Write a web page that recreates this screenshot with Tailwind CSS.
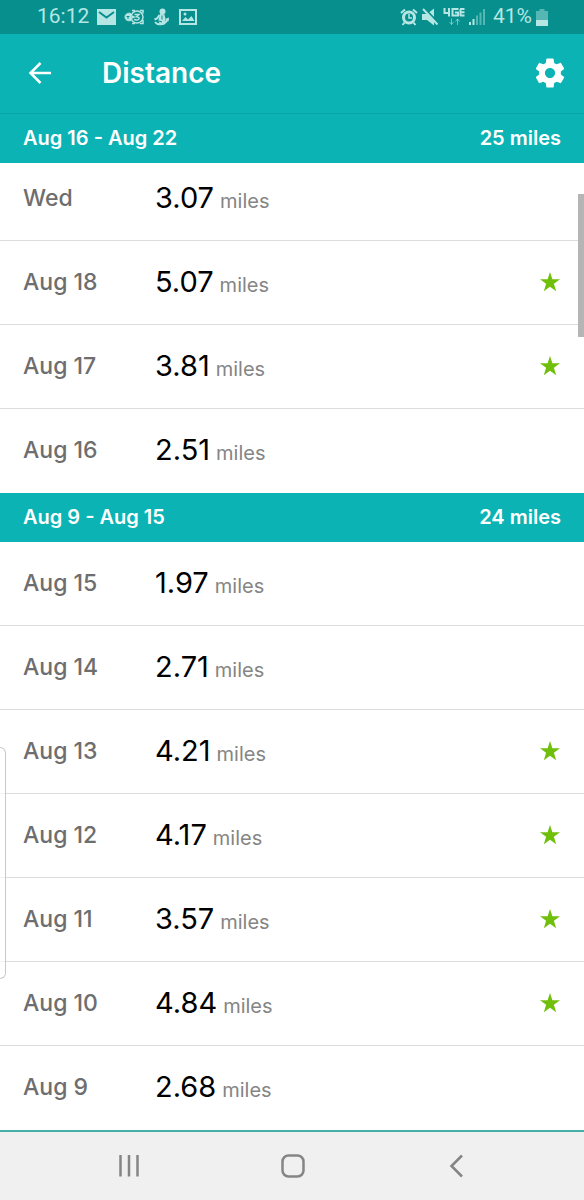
<!DOCTYPE html>
<html lang="en">
<head>
  <meta charset="UTF-8">
  <meta name="viewport" content="width=device-width, initial-scale=1.0">
  <title>Distance</title>
  <script src="https://cdn.jsdelivr.net/npm/@tailwindcss/browser@4"></script>
</head>
<body class="relative min-h-screen flex flex-col bg-white font-['Inter',sans-serif]">
  <!-- Status bar -->
  <div class="h-[34px] shrink-0 flex items-center justify-between bg-[#078f8d] text-[#b5e6e4] pl-[37px] pr-9 font-['Roboto',sans-serif] text-[21px]">
    <div class="flex items-center gap-2">
      <span>16:12</span>
      <svg class="w-[19px] h-4" viewBox="0 0 19 16" fill="currentColor" aria-hidden="true">
        <path d="M0 0h19v16H0z" />
        <path d="M2 3l7.500 5.500L17 3" fill="none" stroke="#078f8d" stroke-width="2" />
      </svg>
      <svg class="w-5 h-4" viewBox="0 0 20 16" fill="none" stroke="currentColor" aria-hidden="true">
        <path d="M7 4.500C4 3.500 1 5 1 8s3 4.500 6 3.500" fill="currentColor" stroke-width="1" />
        <path d="M2.500 7.500h3M3 9h2" stroke="#078f8d" stroke-width="1" />
        <circle cx="13" cy="8" r="6" stroke-width="1.500" />
        <path d="M8 1.500h3M16 1.500h3v3M19 11v3.500h-3M8 14.500h3" stroke-width="1.500" />
        <path d="M10.500 5.500h4.500l-2.500 2.300c4 0 3 3.500 0 3.200l-2.500-.5M8 7l2 1-2 1" stroke-width="1.500" />
      </svg>
      <svg class="w-[19px] h-[18px]" viewBox="0 0 19 18" fill="currentColor" aria-hidden="true">
        <circle cx="10.500" cy="3.500" r="3" />
        <path d="M8 5.500l4.500 1 1 4.500-1 5.500H7.500L6.500 12z" />
        <path d="M7.500 7L5 10.500l-2.500 1M3 14c2.500 3.500 9.500 3.500 13-3" fill="none" stroke="currentColor" stroke-width="2" />
        <path d="M13 11l4-1.500-.5 4z" />
        <path d="M10 7.500v4M7 13l3 1" fill="none" stroke="#078f8d" stroke-width="1" />
      </svg>
      <svg class="w-[18px] h-4" viewBox="0 0 18 16" fill="none" aria-hidden="true">
        <path d="M1 1h16v14H1z" stroke="currentColor" stroke-width="2" />
        <path d="M3 12l3.500-4 2.500 2.500L12.500 7l3 5z" fill="currentColor" />
        <circle cx="6" cy="5" r="1.500" fill="currentColor" />
      </svg>
    </div>
    <div class="flex items-center gap-1">
      <svg class="w-[18px] h-[18px]" viewBox="0 0 18 18" fill="none" stroke="currentColor" aria-hidden="true">
        <circle cx="9" cy="9.500" r="5.500" stroke-width="3" />
        <path d="M1 5l4-3.500M17 5l-4-3.500M4.500 14.500L2.500 17M13.500 14.500l2 2.500" stroke-width="2" />
        <path d="M9 6v4h3" stroke-width="1.500" />
      </svg>
      <svg class="w-[17px] h-[18px]" viewBox="0 0 17 18" fill="currentColor" aria-hidden="true">
        <path d="M0 6h5l7-5.500v17L5 12H0z" />
        <path d="M2 0l15 15.500" stroke="#078f8d" stroke-width="2" />
        <path d="M1 1l14.500 15.500" stroke="currentColor" stroke-width="2" />
      </svg>
      <svg class="w-[22px] h-[18px]" viewBox="0 0 22 18" fill="none" stroke="currentColor" aria-hidden="true">
        <path d="M1.500 0v5h5.500M6 0v8.500M15.500 1H9.500v6.500h5.500V4.500H12M17 1h4.500M17 4.200h4.500M17 7.500h4.500M17.500 1v7" stroke-width="2" />
        <path d="M8.500 10.500v6M6.500 14l2 2.500 2-2.500M14.500 17v-6M12.500 13.500l2-2.500 2 2.500" stroke-width="1" opacity=".6" />
      </svg>
      <svg class="w-4 h-4" viewBox="0 0 16 16" fill="currentColor" aria-hidden="true">
        <path d="M0 13h2v3H0zM3.500 10h2v6h-2z" />
        <path d="M7 6.500h2V16H7zM10.500 3.500h2V16h-2zM14 0h2v16h-2z" opacity=".45" />
      </svg>
      <span class="ml-1">41%</span>
      <svg class="w-3 h-[17px]" viewBox="0 0 12 17" fill="currentColor" aria-hidden="true">
        <path d="M3.500 0h5v2H12v9H0V2h3.500z" opacity=".45" />
        <path d="M0 11h12v6H0z" />
      </svg>
    </div>
  </div>

  <!-- App bar -->
  <header class="h-20 shrink-0 flex items-center bg-[#0bb3b4] text-white border-b border-[#08a5a6] pl-7 pr-[18px] pb-0.5">
    <button type="button" aria-label="Back" class="mr-[50px]">
      <svg class="w-6 h-6" viewBox="0 0 24 24" fill="none" stroke="currentColor" stroke-width="2.500">
        <path d="M23 12H2.500M12.500 2L2.500 12l10 10" />
      </svg>
    </button>
    <h1 class="flex-1 text-[28px] leading-8 font-semibold">Distance</h1>
    <button type="button" aria-label="Settings">
      <svg class="w-8 h-8" viewBox="1 1 22 22" fill="currentColor">
        <path d="M19.430 12.980c.04-.32.070-.64.070-.98s-.03-.66-.07-.98l2.110-1.650c.19-.15.240-.42.120-.64l-2-3.460c-.12-.22-.39-.3-.61-.22l-2.490 1c-.52-.4-1.080-.73-1.690-.98l-.38-2.650C14.460 2.180 14.250 2 14 2h-4c-.25 0-.46.18-.49.42l-.38 2.650c-.61.25-1.170.59-1.690.98l-2.490-1c-.23-.09-.49 0-.61.22l-2 3.460c-.13.22-.07.49.120.64l2.110 1.650c-.04.32-.07.65-.07.98s.03.66.07.98l-2.110 1.650c-.19.15-.24.42-.12.64l2 3.460c.12.22.39.3.61.22l2.490-1c.52.4 1.080.73 1.690.98l.38 2.650c.03.24.24.42.49.42h4c.25 0 .46-.18.49-.42l.38-2.650c.61-.25 1.170-.59 1.690-.98l2.490 1c.23.09.49 0 .61-.22l2-3.460c.12-.22.070-.49-.12-.64l-2.110-1.650zM12 15.500c-1.930 0-3.500-1.570-3.500-3.500s1.570-3.500 3.500-3.500 3.500 1.570 3.500 3.500-1.570 3.500-3.500 3.500z" />
      </svg>
    </button>
  </header>

  <svg class="hidden" aria-hidden="true">
    <symbol id="star" viewBox="0 0 20 20">
      <path d="M10 0l2.400 7.200H20l-6.100 4.600 2.300 7.500L10 14.800l-6.200 4.500 2.300-7.500L0 7.200h7.600z" />
    </symbol>
  </svg>

  <main class="flex-1">
    <section>
      <h2 class="h-[49px] flex items-center justify-between bg-[#0bb3b4] text-white px-[23px] pb-0.5 text-[20px] font-semibold">
        <span>Aug 16 - Aug 22</span>
        <span>25 miles</span>
      </h2>
      <ul>
        <li class="flex items-center px-[23px] pt-[17px] pb-6 border-b border-[#dcdcdc]">
          <span class="w-[132px] text-[23px] leading-9 font-medium text-[#6e6e6e]">Wed</span>
          <span class="flex-1 flex items-baseline gap-1.5 text-[29px] leading-9 text-black">3.07 <span class="text-[20px] leading-6 text-[#858585]">miles</span></span>
        </li>
        <li class="flex items-center px-6 pl-[23px] pt-[23px] pb-6 border-b border-[#dcdcdc]">
          <span class="w-[132px] text-[23px] leading-9 font-medium text-[#6e6e6e]">Aug 18</span>
          <span class="flex-1 flex items-baseline gap-1.5 text-[29px] leading-9 text-black">5.07 <span class="text-[20px] leading-6 text-[#858585]">miles</span></span>
          <svg class="w-5 h-5 fill-[#70bf0b]" role="img" aria-label="Goal met"><use href="#star" /></svg>
        </li>
        <li class="flex items-center px-6 pl-[23px] pt-[23px] pb-6 border-b border-[#dcdcdc]">
          <span class="w-[132px] text-[23px] leading-9 font-medium text-[#6e6e6e]">Aug 17</span>
          <span class="flex-1 flex items-baseline gap-1.5 text-[29px] leading-9 text-black">3.81 <span class="text-[20px] leading-6 text-[#858585]">miles</span></span>
          <svg class="w-5 h-5 fill-[#70bf0b]" role="img" aria-label="Goal met"><use href="#star" /></svg>
        </li>
        <li class="flex items-center px-6 pl-[23px] pt-[23px] pb-6 border-b border-transparent">
          <span class="w-[132px] text-[23px] leading-9 font-medium text-[#6e6e6e]">Aug 16</span>
          <span class="flex-1 flex items-baseline gap-1.5 text-[29px] leading-9 text-black">2.51 <span class="text-[20px] leading-6 text-[#858585]">miles</span></span>
        </li>
      </ul>
    </section>

    <section>
      <h2 class="h-[49px] flex items-center justify-between bg-[#0bb3b4] text-white px-[23px] pb-0.5 text-[20px] font-semibold">
        <span>Aug 9 - Aug 15</span>
        <span>24 miles</span>
      </h2>
      <ul>
        <li class="flex items-center px-6 pl-[23px] pt-[23px] pb-6 border-b border-[#dcdcdc]">
          <span class="w-[132px] text-[23px] leading-9 font-medium text-[#6e6e6e]">Aug 15</span>
          <span class="flex-1 flex items-baseline gap-1.5 text-[29px] leading-9 text-black">1.97 <span class="text-[20px] leading-6 text-[#858585]">miles</span></span>
        </li>
        <li class="flex items-center px-6 pl-[23px] pt-[23px] pb-6 border-b border-[#dcdcdc]">
          <span class="w-[132px] text-[23px] leading-9 font-medium text-[#6e6e6e]">Aug 14</span>
          <span class="flex-1 flex items-baseline gap-1.5 text-[29px] leading-9 text-black">2.71 <span class="text-[20px] leading-6 text-[#858585]">miles</span></span>
        </li>
        <li class="flex items-center px-6 pl-[23px] pt-[23px] pb-6 border-b border-[#dcdcdc]">
          <span class="w-[132px] text-[23px] leading-9 font-medium text-[#6e6e6e]">Aug 13</span>
          <span class="flex-1 flex items-baseline gap-1.5 text-[29px] leading-9 text-black">4.21 <span class="text-[20px] leading-6 text-[#858585]">miles</span></span>
          <svg class="w-5 h-5 fill-[#70bf0b]" role="img" aria-label="Goal met"><use href="#star" /></svg>
        </li>
        <li class="flex items-center px-6 pl-[23px] pt-[23px] pb-6 border-b border-[#dcdcdc]">
          <span class="w-[132px] text-[23px] leading-9 font-medium text-[#6e6e6e]">Aug 12</span>
          <span class="flex-1 flex items-baseline gap-1.5 text-[29px] leading-9 text-black">4.17 <span class="text-[20px] leading-6 text-[#858585]">miles</span></span>
          <svg class="w-5 h-5 fill-[#70bf0b]" role="img" aria-label="Goal met"><use href="#star" /></svg>
        </li>
        <li class="flex items-center px-6 pl-[23px] pt-[23px] pb-6 border-b border-[#dcdcdc]">
          <span class="w-[132px] text-[23px] leading-9 font-medium text-[#6e6e6e]">Aug 11</span>
          <span class="flex-1 flex items-baseline gap-1.5 text-[29px] leading-9 text-black">3.57 <span class="text-[20px] leading-6 text-[#858585]">miles</span></span>
          <svg class="w-5 h-5 fill-[#70bf0b]" role="img" aria-label="Goal met"><use href="#star" /></svg>
        </li>
        <li class="flex items-center px-6 pl-[23px] pt-[23px] pb-6 border-b border-[#dcdcdc]">
          <span class="w-[132px] text-[23px] leading-9 font-medium text-[#6e6e6e]">Aug 10</span>
          <span class="flex-1 flex items-baseline gap-1.5 text-[29px] leading-9 text-black">4.84 <span class="text-[20px] leading-6 text-[#858585]">miles</span></span>
          <svg class="w-5 h-5 fill-[#70bf0b]" role="img" aria-label="Goal met"><use href="#star" /></svg>
        </li>
        <li class="flex items-center px-6 pl-[23px] pt-[23px] pb-6 border-b border-transparent">
          <span class="w-[132px] text-[23px] leading-9 font-medium text-[#6e6e6e]">Aug 9</span>
          <span class="flex-1 flex items-baseline gap-1.5 text-[29px] leading-9 text-black">2.68 <span class="text-[20px] leading-6 text-[#858585]">miles</span></span>
        </li>
      </ul>
    </section>
  </main>

  <!-- Navigation bar -->
  <nav class="h-[70px] shrink-0 flex items-center justify-between bg-[#f0f0f0] border-t-2 border-[#45b0aa] pl-[117px] pr-[116px] text-[#858585]">
    <button type="button" aria-label="Recent apps">
      <svg class="w-6 h-6" viewBox="0 0 24 24" fill="none" stroke="currentColor" stroke-width="2.500">
        <path d="M3.500 1v21.500M12 1v21.500M20.500 1v21.500" />
      </svg>
    </button>
    <button type="button" aria-label="Home">
      <svg class="w-6 h-6" viewBox="0 0 24 24" fill="none" stroke="currentColor" stroke-width="2.500">
        <rect x="1.500" y="1.500" width="21" height="21" rx="6" />
      </svg>
    </button>
    <button type="button" aria-label="Back">
      <svg class="w-6 h-6" viewBox="0 0 24 24" fill="none" stroke="currentColor" stroke-width="2.500">
        <path d="M18 1.500L7.500 12 18 22.500" />
      </svg>
    </button>
  </nav>

  <!-- Scroll thumb and edge panel handle -->
  <div class="absolute right-0 top-[194px] w-1.5 h-[143px] bg-[#b5b5b5]"></div>
  <div class="absolute left-0 top-[747px] w-1.5 h-[232px] rounded-r-md border border-l-0 border-[#c8c8c8] bg-white/60"></div>
</body>
</html>
